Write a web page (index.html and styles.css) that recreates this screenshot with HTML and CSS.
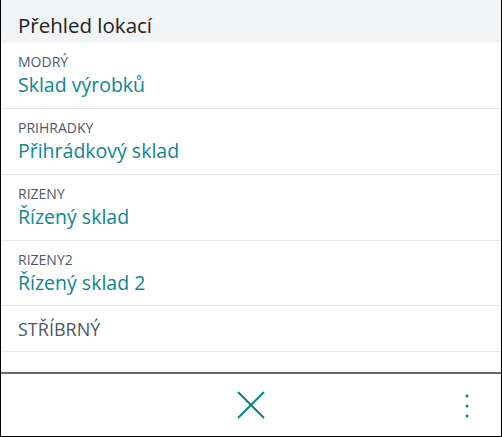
FILE: index.html
```html
<!DOCTYPE html>
<html lang="cs">
<head>
  <meta charset="UTF-8">
  <meta name="viewport" content="width=device-width, initial-scale=1.0">
  <title>Přehled lokací</title>
  <link rel="stylesheet" href="styles.css">
</head>
<body>

  <div class="panel">
    <div class="header">
      <h2>Přehled lokací</h2>
    </div>

    <ul class="list">
      <li class="row">
        <span class="code">MODRÝ</span>
        <span class="name">Sklad výrobků</span>
      </li>
      <li class="row">
        <span class="code">PRIHRADKY</span>
        <span class="name">Přihrádkový sklad</span>
      </li>
      <li class="row">
        <span class="code">RIZENY</span>
        <span class="name">Řízený sklad</span>
      </li>
      <li class="row">
        <span class="code">RIZENY2</span>
        <span class="name">Řízený sklad 2</span>
      </li>
      <li class="row single">
        <span class="code">STŘÍBRNÝ</span>
      </li>
    </ul>

    <div class="footer">
      <button class="close" title="Zavřít">
        <svg width="28" height="28" viewBox="0 0 28 28">
          <path d="M1 1 L27 27 M27 1 L1 27" stroke="#00838f" stroke-width="2" fill="none"/>
        </svg>
      </button>
      <button class="more" title="Další">
        <svg width="4" height="24" viewBox="0 0 4 24">
          <circle cx="2" cy="2" r="1.5" fill="#00838f"/>
          <circle cx="2" cy="12" r="1.5" fill="#00838f"/>
          <circle cx="2" cy="22" r="1.5" fill="#00838f"/>
        </svg>
      </button>
    </div>
  </div>

</body>
</html>
```

FILE: styles.css
```css
body {
  font-family: "Open Sans", "Noto Sans", sans-serif;
  background-color: #fff;
  margin: 0;
}

.panel {
  width: 502px;
  height: 437px;
  box-sizing: border-box;
  border: 1px solid #000;
  border-top: none;
  display: flex;
  flex-direction: column;
}

.header {
  background-color: #f3f4f6;
  height: 43px;
  box-sizing: border-box;
  padding: 6px 17px 0;
  display: flex;
  align-items: center;
}

.header h2 {
  color: #212121;
  font-size: 20.5px;
  font-weight: normal;
  margin: 0;
}

.list {
  list-style: none;
  margin: 0;
  padding: 0;
  flex: 1;
}

.row {
  display: flex;
  flex-direction: column;
  padding: 9px 17px 9px;
  border-bottom: 1px solid #e6e6e6;
}

.row:nth-child(4) {
  padding-bottom: 8px;
}

.code {
  color: #505866;
  font-size: 14px;
  line-height: 19px;
}

.name {
  color: #0a8791;
  font-size: 19.5px;
  line-height: 28px;
}

.row.single {
  padding: 9px 17px 8px;
}

.row.single .code {
  font-size: 18px;
  line-height: 28px;
}

.footer {
  border-top: 2px solid #6b6b6b;
  height: 62px;
  display: flex;
  align-items: center;
  justify-content: center;
  position: relative;
}

button {
  background: none;
  border: none;
  padding: 0;
  cursor: pointer;
  display: flex;
}

.more {
  position: absolute;
  right: 32px;
  top: 20px;
}
```
